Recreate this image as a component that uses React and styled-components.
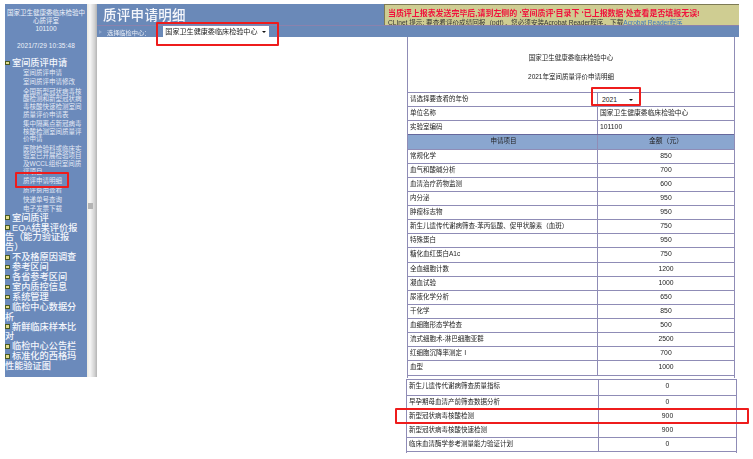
import React from 'react';
import styled, { createGlobalStyle } from 'styled-components';

const stack = `"Liberation Sans", "Noto Sans CJK SC", sans-serif`;

const GlobalStyle = createGlobalStyle`
  html, body {
    margin: 0;
    padding: 0;
    background: #fff;
    overflow: hidden;
  }
`;

const Page = styled.div`
  position: relative;
  width: 753px;
  height: 459px;
  overflow: hidden;
  font-family: ${stack};
`;

const Shot = styled.div`
  display: flex;
  align-items: flex-start;
  height: 449px;
  padding: 4px 0 0 5px;
  overflow: hidden;
  filter: blur(0.4px);
`;

const Sidebar = styled.aside`
  width: 82px;
  height: 373px;
  flex: none;
  background: #6b8abb;
  color: #eef2fa;
  overflow: hidden;
`;

const OrgName = styled.div`
  width: 80px;
  margin: 5px auto 0;
  font-size: 6.5px;
  line-height: 8px;
  text-align: center;
`;

const Stamp = styled.div`
  margin: 9px 0 9px;
  font-size: 6.5px;
  line-height: 8px;
  letter-spacing: 0.1px;
  text-align: center;
`;

const TopItem = styled.div`
  padding-right: 6px;
  font-size: 9.2px;
  font-weight: 500;
  line-height: 9.9px;
  color: #f4f6fb;
`;

const Bullet = styled.span`
  display: inline-block;
  width: 4.5px;
  height: 4.5px;
  margin: 0 2.5px 1px 0;
  background: #e2dc8c;
  border: 1px solid #4b5a20;
  box-sizing: border-box;
  vertical-align: middle;
`;

const SubList = styled.div`
  padding: 0 0 1px 18px;
`;

const SubItem = styled.div`
  margin-bottom: 1.6px;
  font-size: 6.5px;
  line-height: 7.7px;
  color: #e3e9f5;

  &:last-child {
    margin-bottom: 0;
  }
`;

const Splitter = styled.div`
  position: relative;
  width: 10px;
  height: 373px;
  flex: none;
  background: linear-gradient(to right, #eceadf, #f6f6f6 30%, #d2d2d2 75%, #b4b4b4);
`;

const Grip = styled.span`
  position: absolute;
  left: 1px;
  top: 199px;
  width: 5px;
  height: 6px;
  background: #b4b4b4;
`;

const Main = styled.main`
  flex: 1;
  min-width: 0;
  margin-right: 14px;
`;

const TopRow = styled.div`
  display: flex;
  height: 21px;
`;

const TitleBand = styled.div`
  flex: 1;
  background: #6a89b8;
  color: #f4f6fb;
  font-size: 13.5px;
  font-weight: 500;
  line-height: 24px;
  letter-spacing: 0.3px;
  padding-left: 6px;
  overflow: hidden;
`;

const Notice = styled.div`
  width: 355px;
  box-sizing: border-box;
  padding: 4px 0 0 3px;
  background: #cfcd92;
  border-top: 1px solid #7d7a55;
  border-left: 1px solid #7d7a55;
  overflow: hidden;
  white-space: nowrap;
`;

const NoticeAlert = styled.div`
  color: #f0113c;
  font-size: 7.95px;
  font-weight: 700;
  line-height: 10px;
`;

const NoticeHint = styled.div`
  color: #333;
  font-size: 6.6px;
  line-height: 8px;
`;

const NoticeLink = styled.span`
  color: #3c78c0;
`;

const SubBar = styled.div`
  display: flex;
  align-items: flex-end;
  height: 12px;
  box-sizing: border-box;
  padding-left: 2px;
  background: #6a89b8;
  border-top: 1px solid #8a82ad;
  color: #e8edf6;
`;

const BarArrow = styled.span`
  width: 0;
  height: 0;
  margin: 0 5px 3px 0;
  border-top: 2px solid transparent;
  border-bottom: 2px solid transparent;
  border-left: 3px solid #8ea6cc;
`;

const BarLabel = styled.span`
  font-size: 6.2px;
  line-height: 8px;
`;

const SelectBox = styled.div`
  display: flex;
  align-items: center;
  justify-content: space-between;
  width: ${(p) => p.$width}px;
  height: ${(p) => p.$height}px;
  box-sizing: border-box;
  padding: 0 3px 0 2px;
  background: #fff;
  color: #222;
  font-size: ${(p) => p.$size}px;
  line-height: 10px;
  white-space: nowrap;
`;

const Caret = styled.span`
  width: 0;
  height: 0;
  flex: none;
  border-left: 2px solid transparent;
  border-right: 2px solid transparent;
  border-top: 2px solid #111;
`;

const CenterPick = styled.div`
  margin-left: 13px;
`;

const Content = styled.div`
  padding-left: 310px;
`;

const Sheet = styled.div`
  width: ${(p) => p.$width}px;
  margin-left: ${(p) => p.$shift}px;
  border-left: 1px solid #8f8cb6;
  border-right: 1px solid #8f8cb6;
  box-sizing: border-box;
`;

const SheetHead = styled.div`
  height: 55px;
  box-sizing: border-box;
  padding-top: 16.5px;
  color: #222;
  font-size: 6.5px;
  line-height: 8px;
  text-align: center;
`;

const SheetLine = styled.div`
  margin-bottom: 11px;
`;

const Row = styled.div`
  display: grid;
  grid-template-columns: ${(p) => p.$left}px 1fr;
  height: ${(p) => p.$height || 14.13}px;
  box-sizing: border-box;
  border-top: 1px solid ${(p) => (p.$head ? '#66689c' : '#8f8cb6')};
  background: ${(p) => (p.$head ? '#8aa6cf' : '#fff')};
  color: #222;
  font-size: 6.5px;
  line-height: 12px;
`;

const Label = styled.div`
  padding-left: 2px;
  text-align: ${(p) => (p.$head ? 'center' : 'left')};
  white-space: nowrap;
  overflow: hidden;
`;

const Value = styled.div`
  border-left: 1px solid #8f8cb6;
  font-size: 6.8px;
  text-align: ${(p) => (p.$left ? 'left' : 'center')};
  padding-left: ${(p) => (p.$left ? 2 : 0)}px;
`;

const Gap = styled.div`
  height: 1px;
`;

const Mark = styled.div`
  position: absolute;
  box-sizing: border-box;
  border: 2px solid #ee1c1c;
  border-radius: 1px;
  left: ${(p) => p.$x}px;
  top: ${(p) => p.$y}px;
  width: ${(p) => p.$w}px;
  height: ${(p) => p.$h}px;
`;

const applyItems = [
  '室间质评申请',
  '室间质评申请修改',
  '全国新型冠状病毒核酸检测和新型冠状病毒核酸快速检测室间质量评价申请表',
  '集中隔离点新冠病毒核酸检测室间质量评价申请',
  '医院检验科或临床实验室已开展检验项目及WCCL组织室间质评项目',
  '质评申请明细',
  '质评费用查看',
  '快递单号查询',
  '电子发票下载',
];

const topItems = [
  '室间质评',
  'EQA结果评价报告（能力验证报告）',
  '不及格原因调查',
  '参考区间',
  '各省参考区间',
  '室内质控信息',
  '系统管理',
  '临检中心数据分析',
  '新鲜临床样本比对',
  '临检中心公告栏',
  '标准化的西格玛性能验证图',
];

const fees = [
  ['常规化学', 850],
  ['血气和酸碱分析', 700],
  ['血清治疗药物监测', 600],
  ['内分泌', 950],
  ['肿瘤标志物', 950],
  ['新生儿遗传代谢病筛查-苯丙氨酸、促甲状腺素（血斑）', 750],
  ['特殊蛋白', 950],
  ['糖化血红蛋白A1c', 750],
  ['全血细胞计数', 1200],
  ['凝血试验', 1000],
  ['尿液化学分析', 650],
  ['干化学', 850],
  ['血细胞形态学检查', 500],
  ['流式细胞术-淋巴细胞亚群', 2500],
  ['红细胞沉降率测定Ⅰ', 700],
  ['血型', 1000],
];

const extraFees = [
  ['新生儿遗传代谢病筛查质量指标', 0, 16],
  ['早孕期母血清产前筛查数据分析', 0],
  ['新型冠状病毒核酸检测', 900],
  ['新型冠状病毒核酸快速检测', 900],
  ['临床血清酶学参考测量能力验证计划', 0],
];

export default function App() {
  return (
    <Page>
      <GlobalStyle />
      <Shot>
        <Sidebar>
          <OrgName>国家卫生健康委临床检验中心质评室<br />101100</OrgName>
          <Stamp>2021/7/29 10:35:48</Stamp>
          <TopItem><Bullet />室间质评申请</TopItem>
          <SubList>
            {applyItems.map((item) => <SubItem key={item}>{item}</SubItem>)}
          </SubList>
          {topItems.map((item) => <TopItem key={item}><Bullet />{item}</TopItem>)}
        </Sidebar>
        <Splitter><Grip /></Splitter>
        <Main>
          <TopRow>
            <TitleBand>质评申请明细</TitleBand>
            <Notice>
              <NoticeAlert>当质评上报表发送完毕后,请到左侧的 ‘室间质评’目录下 ‘已上报数据’处查看是否填报无误!</NoticeAlert>
              <NoticeHint>CLInet 提示: 要查看评价成绩回报（pdf），您必须安装Acrobat Reader程序，下载<NoticeLink>Acrobat Reader程序</NoticeLink></NoticeHint>
            </Notice>
          </TopRow>
          <SubBar>
            <BarArrow />
            <BarLabel>选择临检中心：</BarLabel>
            <CenterPick>
              <SelectBox $width={106} $height={11} $size={7.1}>国家卫生健康委临床检验中心<Caret /></SelectBox>
            </CenterPick>
          </SubBar>
          <Content>
            <Sheet $shift={0} $width={328}>
              <SheetHead>
                <SheetLine>国家卫生健康委临床检验中心</SheetLine>
                <SheetLine>2021年室间质量评价申请明细</SheetLine>
              </SheetHead>
              <Row $left={189}>
                <Label>请选择要查看的年份</Label>
                <Value $left>
                  <SelectBox $width={36} $height={13} $size={6.8}>2021<Caret /></SelectBox>
                </Value>
              </Row>
              <Row $left={189}><Label>单位名称</Label><Value $left>国家卫生健康委临床检验中心</Value></Row>
              <Row $left={189}><Label>实验室编码</Label><Value $left>101100</Value></Row>
              <Row $left={189} $head><Label $head>申请项目</Label><Value>金额（元）</Value></Row>
              {fees.map(([name, fee]) => (
                <Row $left={189} key={name}><Label>{name}</Label><Value>{fee}</Value></Row>
              ))}
              <Row $left={189} $height={3} />
            </Sheet>
            <Gap />
            <Sheet $shift={-1} $width={331}>
              {extraFees.map(([name, fee, height]) => (
                <Row $left={191} $height={height} key={name}><Label>{name}</Label><Value>{fee}</Value></Row>
              ))}
              <Row $left={191} $height={3} />
            </Sheet>
          </Content>
        </Main>
      </Shot>
      <Mark $x={15} $y={172} $w={54} $h={16} />
      <Mark $x={156} $y={22} $w={123} $h={24} />
      <Mark $x={591} $y={87} $w={50} $h={19} />
      <Mark $x={395} $y={408} $w={354} $h={16} />
    </Page>
  );
}
